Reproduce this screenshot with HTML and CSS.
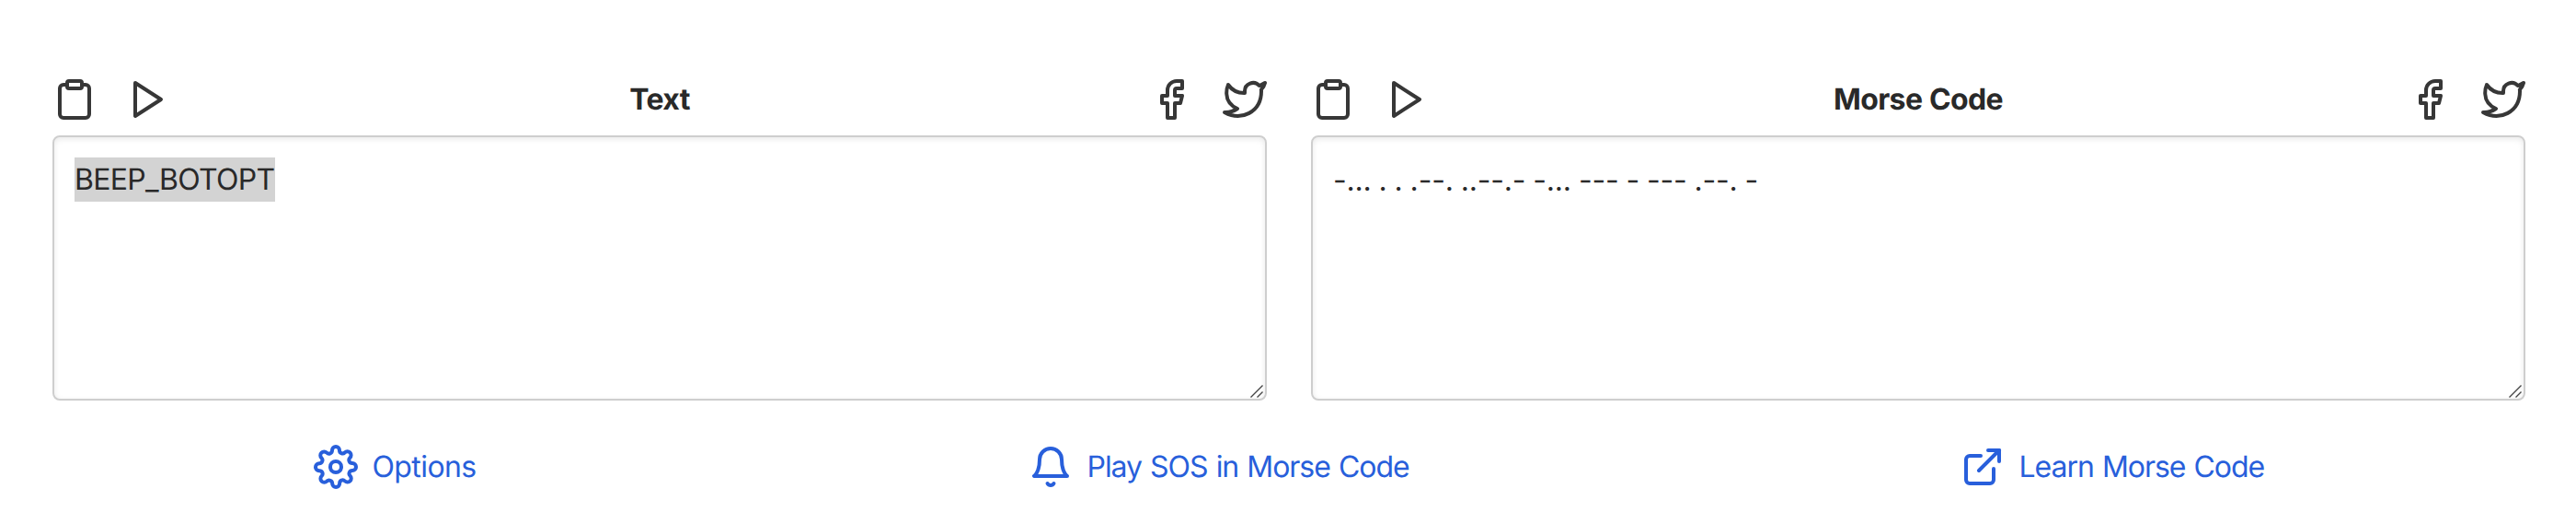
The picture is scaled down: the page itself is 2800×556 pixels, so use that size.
FILE: index.html
```html
<!DOCTYPE html>
<html lang="en">
<head>
<meta charset="utf-8">
<title>Morse Code Translator</title>
<link rel="stylesheet" href="styles.css">
</head>
<body>
<svg class="sprite" aria-hidden="true">
  <symbol id="clipboard" viewBox="0 0 24 24"><path d="M16 4h2a2 2 0 0 1 2 2v14a2 2 0 0 1-2 2H6a2 2 0 0 1-2-2V6a2 2 0 0 1 2-2h2"/><rect x="8" y="2" width="8" height="4" rx="1" ry="1"/></symbol>
  <symbol id="play" viewBox="0 0 24 24"><polygon points="5 3 19 12 5 21 5 3"/></symbol>
  <symbol id="facebook" viewBox="0 0 24 24"><path d="M18 2h-3a5 5 0 0 0-5 5v3H7v4h3v8h4v-8h3l1-4h-4V7a1 1 0 0 1 1-1h3z"/></symbol>
  <symbol id="twitter" viewBox="0 0 24 24"><path d="M23 3a10.9 10.9 0 0 1-3.14 1.53 4.48 4.48 0 0 0-7.86 3v1A10.66 10.66 0 0 1 3 4s-4 9 5 13a11.64 11.64 0 0 1-7 2c9 5 20 0 20-11.5a4.5 4.5 0 0 0-.08-.83A7.72 7.72 0 0 0 23 3z"/></symbol>
</svg>
<main class="page">
  <section class="panel">
    <header class="bar">
      <div class="actions">
        <svg class="icon"><use href="#clipboard"/></svg>
        <svg class="icon"><use href="#play"/></svg>
      </div>
      <h2 class="title">Text</h2>
      <div class="actions">
        <svg class="icon"><use href="#facebook"/></svg>
        <svg class="icon"><use href="#twitter"/></svg>
      </div>
    </header>
    <div class="field"><span class="selected">BEEP_BOTOPT</span>
      <svg class="grip" viewBox="0 0 14 14"><path d="M.5 13.5 13.5.5M7.5 13.5l6-6"/></svg>
    </div>
  </section>
  <section class="panel">
    <header class="bar">
      <div class="actions">
        <svg class="icon"><use href="#clipboard"/></svg>
        <svg class="icon"><use href="#play"/></svg>
      </div>
      <h2 class="title">Morse Code</h2>
      <div class="actions">
        <svg class="icon"><use href="#facebook"/></svg>
        <svg class="icon"><use href="#twitter"/></svg>
      </div>
    </header>
    <div class="field"><span class="morse">-... . . .--. ..--.- -... --- - --- .--. -</span>
      <svg class="grip" viewBox="0 0 14 14"><path d="M.5 13.5 13.5.5M7.5 13.5l6-6"/></svg>
    </div>
  </section>
</main>
<nav class="links">
  <a class="link link-options"><svg class="icon" viewBox="0 0 24 24"><circle cx="12" cy="12" r="3"/><path d="M19.4 15a1.65 1.65 0 0 0 .33 1.82l.06.06a2 2 0 0 1 0 2.83 2 2 0 0 1-2.83 0l-.06-.06a1.65 1.65 0 0 0-1.82-.33 1.65 1.65 0 0 0-1 1.51V21a2 2 0 0 1-2 2 2 2 0 0 1-2-2v-.09A1.65 1.65 0 0 0 9 19.4a1.65 1.65 0 0 0-1.82.33l-.06.06a2 2 0 0 1-2.83 0 2 2 0 0 1 0-2.83l.06-.06a1.65 1.65 0 0 0 .33-1.82 1.65 1.65 0 0 0-1.51-1H3a2 2 0 0 1-2-2 2 2 0 0 1 2-2h.09A1.65 1.65 0 0 0 4.6 9a1.65 1.65 0 0 0-.33-1.82l-.06-.06a2 2 0 0 1 0-2.83 2 2 0 0 1 2.83 0l.06.06a1.65 1.65 0 0 0 1.82.33H9a1.65 1.65 0 0 0 1-1.51V3a2 2 0 0 1 2-2 2 2 0 0 1 2 2v.09a1.65 1.65 0 0 0 1 1.51 1.65 1.65 0 0 0 1.82-.33l.06-.06a2 2 0 0 1 2.83 0 2 2 0 0 1 0 2.83l-.06.06a1.65 1.65 0 0 0-.33 1.82V9a1.65 1.65 0 0 0 1.51 1H21a2 2 0 0 1 2 2 2 2 0 0 1-2 2h-.09a1.65 1.65 0 0 0-1.51 1z"/></svg><span>Options</span></a>
  <a class="link link-sos"><svg class="icon" viewBox="0 0 24 24"><path d="M18 8A6 6 0 0 0 6 8c0 7-3 9-3 9h18s-3-2-3-9"/><path d="M13.73 21a2 2 0 0 1-3.46 0"/></svg><span>Play SOS in Morse Code</span></a>
  <a class="link link-learn"><svg class="icon" viewBox="0 0 24 24"><path d="M18 13v6a2 2 0 0 1-2 2H5a2 2 0 0 1-2-2V8a2 2 0 0 1 2-2h6"/><polyline points="15 3 21 3 21 9"/><line x1="10" y1="14" x2="21" y2="3"/></svg><span>Learn Morse Code</span></a>
</nav>
</body>
</html>
```
FILE: styles.css
```css
* { box-sizing: border-box; }
body {
  margin: 0;
  background: #fff;
  color: #292929;
  font: 32px/48px Inter, "Liberation Sans", sans-serif;
  text-rendering: geometricPrecision;
}
.sprite { display: none; }
.page {
  display: grid;
  grid-template-columns: 1320px 1320px;
  gap: 48px;
  padding: 83px 0 0 57px;
}
.bar {
  display: grid;
  grid-template-columns: 1fr auto 1fr;
  align-items: center;
  height: 48px;
  margin-bottom: 16px;
}
.actions { display: flex; gap: 32px; }
.actions:last-child { justify-content: flex-end; }
.icon {
  width: 48px;
  height: 48px;
  flex: none;
  fill: none;
  stroke: currentColor;
  stroke-width: 2;
  stroke-linecap: round;
  stroke-linejoin: round;
}
.actions .icon { stroke: #373737; }
.title {
  margin: 0;
  padding-top: 1px;
  font-size: 32px;
  font-weight: 700;
  line-height: 48px;
  letter-spacing: -.6px;
  word-spacing: .5px;
}
.field {
  position: relative;
  height: 288px;
  padding: 22px;
  border: 2px solid #cecece;
  border-radius: 8px;
  box-shadow: inset 0 2px 6px rgba(0, 0, 0, .09);
  white-space: nowrap;
}
.selected {
  display: inline-block;
  height: 48px;
  background: #d3d3d3;
  letter-spacing: -.7px;
  line-height: 48px;
}
.morse {
  display: inline-block;
  line-height: 50px;
  font-feature-settings: "calt" 0;
  letter-spacing: -.2px;
  word-spacing: -.8px;
}
.grip {
  position: absolute;
  right: 2px;
  bottom: 1px;
  width: 14px;
  height: 14px;
  fill: none;
  stroke: #444;
  stroke-width: 1.4;
}
.links {
  display: flex;
  gap: 600px;
  padding: 48px 0 0 341px;
  color: #285fdb;
  letter-spacing: -1.05px;
  word-spacing: 1.2px;
}
.link { display: flex; gap: 15.5px; white-space: nowrap; }
.link-options { width: 177px; letter-spacing: -.6px; }
.link-sos { width: 413px; }
.link-learn { width: 330px; }
```
